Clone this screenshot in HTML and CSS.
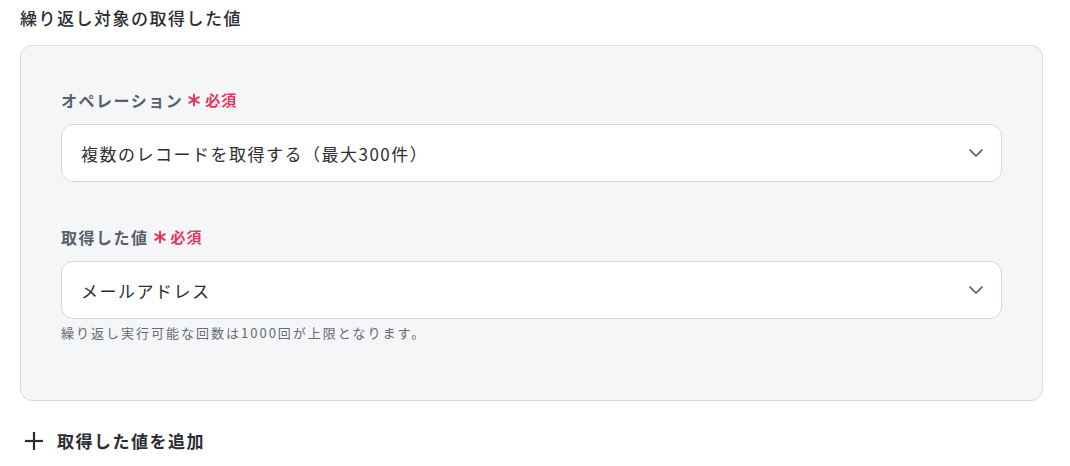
FILE: index.html
```html
<!DOCTYPE html>
<html lang="ja">
<head>
<meta charset="utf-8">
<link rel="stylesheet" href="styles.css">
</head>
<body>
<div class="page">
  <h2 class="title">繰り返し対象の取得した値</h2>
  <div class="panel">
    <div class="field">
      <div class="label">オペレーション<span class="req"><svg class="ast" viewBox="0 0 14 14" width="14" height="14"><g stroke="currentColor" stroke-width="2" stroke-linecap="round"><line x1="7" y1="1.5" x2="7" y2="12.5"/><line x1="2.2" y1="4.2" x2="11.8" y2="9.8"/><line x1="2.2" y1="9.8" x2="11.8" y2="4.2"/></g></svg>必須</span></div>
      <div class="select">
        <span>複数のレコードを取得する（最大300件）</span>
        <svg class="chev" viewBox="0 0 16 10" width="16" height="10"><path d="M2 2 L8 8 L14 2" fill="none" stroke="currentColor" stroke-width="1.7" stroke-linecap="round" stroke-linejoin="round"/></svg>
      </div>
    </div>
    <div class="field">
      <div class="label">取得した値<span class="req"><svg class="ast" viewBox="0 0 14 14" width="14" height="14"><g stroke="currentColor" stroke-width="2" stroke-linecap="round"><line x1="7" y1="1.5" x2="7" y2="12.5"/><line x1="2.2" y1="4.2" x2="11.8" y2="9.8"/><line x1="2.2" y1="9.8" x2="11.8" y2="4.2"/></g></svg>必須</span></div>
      <div class="select">
        <span>メールアドレス</span>
        <svg class="chev" viewBox="0 0 16 10" width="16" height="10"><path d="M2 2 L8 8 L14 2" fill="none" stroke="currentColor" stroke-width="1.7" stroke-linecap="round" stroke-linejoin="round"/></svg>
      </div>
      <p class="help">繰り返し実行可能な回数は1000回が上限となります。</p>
    </div>
  </div>
  <button class="add">
    <svg class="plus" viewBox="0 0 18 18" width="18" height="18"><g stroke="currentColor" stroke-width="2.2"><line x1="0" y1="9" x2="18" y2="9"/><line x1="9" y1="0" x2="9" y2="18"/></g></svg>
    <span>取得した値を追加</span>
  </button>
</div>
</body>
</html>
```

FILE: styles.css
```css
* { box-sizing: border-box; }
html, body { margin: 0; padding: 0; background: #ffffff; }
body {
  font-family: "Noto Sans CJK JP", "Noto Sans", sans-serif;
  color: #2b2e33;
}
.page {
  width: 1043px;
  padding: 6px 0 0 20px;
}
.title {
  margin: 0;
  font-size: 17px;
  line-height: 24px;
  font-weight: 500;
  letter-spacing: 1.5px;
  color: #2b2e33;
}
.panel {
  margin-top: 15px;
  background: #f5f6f8;
  border: 1px solid #d9dce1;
  border-radius: 12px;
  padding: 43px 40px 58px 40px;
  display: flex;
  flex-direction: column;
  gap: 44px;
}
.field { display: flex; flex-direction: column; }
.label {
  font-size: 16px;
  line-height: 22px;
  font-weight: 700;
  letter-spacing: 1.5px;
  color: #5a5f69;
  display: flex;
  align-items: center;
  margin-bottom: 13px;
}
.req {
  display: inline-flex;
  align-items: center;
  color: #e8345e;
  font-size: 15px;
  letter-spacing: 1px;
  margin-left: 4px;
}
.ast { margin-right: 4px; }
.select {
  height: 58px;
  background: #ffffff;
  border: 1px solid #d3d7dd;
  border-radius: 12px;
  display: flex;
  align-items: center;
  justify-content: space-between;
  padding: 0 17px 0 19px;
  font-size: 17px;
  letter-spacing: 1.5px;
  color: #2b2e33;
}
.chev { color: #55585e; }
.help {
  margin: 5px 0 0 0;
  font-size: 13px;
  line-height: 18px;
  letter-spacing: 2px;
  color: #666a71;
}
.add {
  margin-top: 29px;
  display: flex;
  align-items: center;
  gap: 14px;
  background: none;
  border: none;
  padding: 0 0 0 5px;
  font-family: inherit;
  font-size: 17px;
  line-height: 22px;
  font-weight: 700;
  letter-spacing: 1.5px;
  color: #2b2e33;
  cursor: pointer;
}
.plus { color: #2b2e33; }
```
